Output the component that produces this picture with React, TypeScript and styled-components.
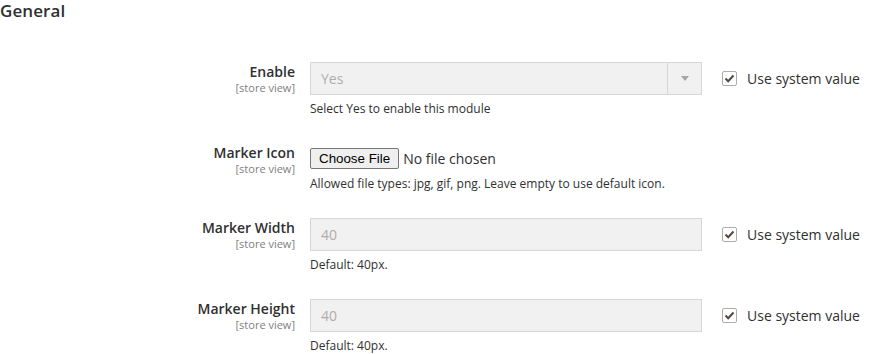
import React from "react";
import styled, { createGlobalStyle } from "styled-components";

const GlobalStyle = createGlobalStyle`
  html, body { margin: 0; padding: 0; background: #ffffff; }
  body { font-family: "Open Sans", "Liberation Sans", sans-serif; color: #303030; }
  * { box-sizing: border-box; }
`;

const Page = styled.div`
  width: 875px;
  height: 354px;
  overflow: hidden;
  padding-top: 1px;
`;

const Title = styled.h2`
  margin: 0;
  font-size: 17px;
  line-height: 1.2;
  font-weight: 600;
  color: #303030;
  letter-spacing: 0.1px;
`;

const Fields = styled.div`
  display: flex;
  flex-direction: column;
  gap: 25px;
  margin-top: 41px;
`;

const Field = styled.div`
  display: grid;
  grid-template-columns: 295px 392px auto;
  column-gap: 15px;
`;

const LabelCol = styled.div`
  text-align: right;
  padding-top: 2px;
`;

const Label = styled.div`
  font-size: 14px;
  font-weight: 600;
  line-height: 1.2;
  color: #303030;
`;

const Scope = styled.div`
  font-size: 11px;
  line-height: 1.2;
  color: #808080;
`;

const ControlCol = styled.div`
  display: flex;
  flex-direction: column;
`;

const Note = styled.div`
  margin-top: 6px;
  font-size: 12px;
  line-height: 1.4;
  color: #303030;
`;

const Box = styled.div`
  height: 33px;
  display: flex;
  align-items: center;
  background: #f1f1f1;
  border: 1px solid #d6d6d6;
  font-size: 14px;
  color: #adadad;
`;

const BoxValue = styled.span`
  flex: 1;
  padding-left: 10px;
`;

const Arrow = styled.span`
  width: 34px;
  height: 100%;
  border-left: 1px solid #d6d6d6;
  display: flex;
  align-items: center;
  justify-content: center;
  &::after {
    content: "";
    border-left: 4px solid transparent;
    border-right: 4px solid transparent;
    border-top: 5px solid #a6a6a6;
  }
`;

const FileRow = styled.div`
  height: 27px;
  padding-top: 5px;
  display: flex;
  align-items: flex-start;
  gap: 4px;
`;

const FileButton = styled.button`
  font-family: "Liberation Sans", Arial, sans-serif;
  font-size: 13.33px;
  height: 21px;
  padding: 0 8px;
  background: #efefef;
  border: 1px solid #767676;
  border-radius: 2px;
  color: #000000;
`;

const FileText = styled.span`
  font-size: 14px;
  line-height: 21px;
  color: #303030;
`;

const SystemCol = styled.label`
  height: 33px;
  display: flex;
  align-items: center;
  gap: 10px;
  margin-left: 5px;
  font-size: 14px;
  color: #303030;
`;

const Check = styled.span`
  width: 15px;
  height: 15px;
  border: 1px solid #adadad;
  border-radius: 2px;
  background: #fff;
  display: flex;
  align-items: center;
  justify-content: center;
`;

const CheckedBox = () => (
  <Check>
    <svg width="11" height="9" viewBox="0 0 11 9">
      <path d="M1.5 4.5 L4.2 7.2 L9.5 1.5" fill="none" stroke="#514943" strokeWidth="2" />
    </svg>
  </Check>
);

const SystemValue = () => (
  <SystemCol>
    <CheckedBox />
    <span>Use system value</span>
  </SystemCol>
);

const LabelBlock = ({ text }: { text: string }) => (
  <LabelCol>
    <Label>{text}</Label>
    <Scope>[store view]</Scope>
  </LabelCol>
);

export default function App() {
  return (
    <Page>
      <GlobalStyle />
      <Title>General</Title>
      <Fields>
        <Field>
          <LabelBlock text="Enable" />
          <ControlCol>
            <Box>
              <BoxValue>Yes</BoxValue>
              <Arrow />
            </Box>
            <Note>Select Yes to enable this module</Note>
          </ControlCol>
          <SystemValue />
        </Field>
        <Field>
          <LabelBlock text="Marker Icon" />
          <ControlCol>
            <FileRow>
              <FileButton type="button">Choose File</FileButton>
              <FileText>No file chosen</FileText>
            </FileRow>
            <Note>Allowed file types: jpg, gif, png. Leave empty to use default icon.</Note>
          </ControlCol>
          <div />
        </Field>
        <Field>
          <LabelBlock text="Marker Width" />
          <ControlCol>
            <Box>
              <BoxValue>40</BoxValue>
            </Box>
            <Note>Default: 40px.</Note>
          </ControlCol>
          <SystemValue />
        </Field>
        <Field>
          <LabelBlock text="Marker Height" />
          <ControlCol>
            <Box>
              <BoxValue>40</BoxValue>
            </Box>
            <Note>Default: 40px.</Note>
          </ControlCol>
          <SystemValue />
        </Field>
      </Fields>
    </Page>
  );
}
